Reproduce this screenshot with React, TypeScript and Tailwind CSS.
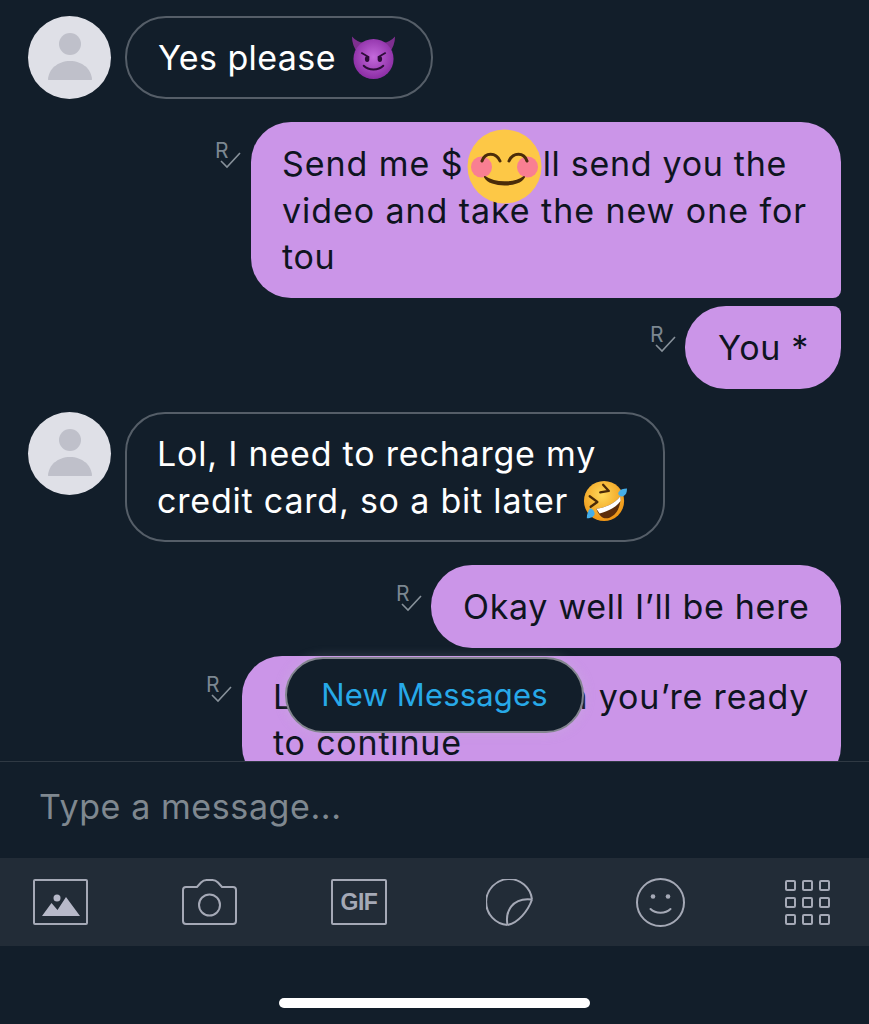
import React from "react";

const font = "font-['Inter','Liberation_Sans',sans-serif]";

function Avatar() {
  return (
    <div className="w-[83px] h-[83px] rounded-full bg-[#dfe0e7] shrink-0 flex items-center justify-center">
      <svg width="83" height="83" viewBox="0 0 83 83">
        <circle cx="42" cy="28" r="11" fill="#bfc0ca" />
        <path d="M20 63.500C20.500 53 30 45 42 45S63.500 53 64 63.500c0 .3-.2.500-.5.500h-43c-.3 0-.5-.2-.5-.5Z" fill="#bfc0ca" />
      </svg>
    </div>
  );
}

function Receipt({ className }: { className: string }) {
  return (
    <div className={`relative w-[26px] h-[30px] shrink-0 mt-[19px] ${className}`}>
      <span className="absolute left-[-1px] top-[-1px] text-[21px] leading-[22px] text-[#7c8791] font-['Inter',sans-serif]">R</span>
      <svg className="absolute left-0 top-0" width="26" height="30" viewBox="0 0 26 30" fill="none">
        <path d="M5 20l6 6 13-14" stroke="#87919a" strokeWidth="1.600" />
      </svg>
    </div>
  );
}

function Devil() {
  return (
    <svg width="45" height="45" viewBox="0 0 46 45" className="shrink-0">
      <defs>
        <radialGradient id="dv" cx="50%" cy="45%" r="60%">
          <stop offset="0%" stopColor="#c469dc" />
          <stop offset="100%" stopColor="#86289f" />
        </radialGradient>
      </defs>
      <path d="M1 1c3 4 8 6 13 7L7 18C3 13 1 7 1 1ZM45 1c-3 4-8 6-13 7l7 10c4-5 6-11 6-17Z" fill="#7e2f8f" />
      <circle cx="23" cy="24" r="20.500" fill="url(#dv)" />
      <path d="M11 18l7 4M35 18l-7 4" stroke="#2c0d38" strokeWidth="1.800" strokeLinecap="round" />
      <ellipse cx="16.500" cy="24" rx="2.300" ry="3" fill="#2c0d38" />
      <ellipse cx="29.500" cy="24" rx="2.300" ry="3" fill="#2c0d38" />
      <path d="M13 31c5 5 15 5 20 0" stroke="#2c0d38" strokeWidth="2" fill="none" strokeLinecap="round" />
    </svg>
  );
}

function Rofl() {
  return (
    <svg width="44" height="44" viewBox="0 0 46 46" className="shrink-0">
      <defs>
        <radialGradient id="rf" cx="45%" cy="35%" r="65%">
          <stop offset="0%" stopColor="#ffd95a" />
          <stop offset="100%" stopColor="#ee9414" />
        </radialGradient>
      </defs>
      <circle cx="22" cy="23" r="21" fill="url(#rf)" />
      <path d="M21 6l6 6.500-9 1.500M7 18l8 6-7 5" stroke="#4a2a08" strokeWidth="2.400" fill="none" strokeLinecap="round" strokeLinejoin="round" />
      <path d="M14 31c9-1 19-5 25-13 1 12-5 21-13 23-6 1-10-4-12-10Z" fill="#5c2d0a" />
      <path d="M14 31c9-1 19-5 25-13l.3 5c-5 7-14 11-22 13Z" fill="#fff" />
      <path d="M37 14c2-3 5-4 9-4 0 4-1 7-4 8-3 1-6-2-5-4ZM7 31c-2 3-3 6-3 10 3 0 7-1 8-4 1-3-3-7-5-6Z" fill="#45aee8" />
    </svg>
  );
}

function Smiling() {
  return (
    <svg width="75" height="75" viewBox="0 0 75 75">
      <circle cx="37.500" cy="37.500" r="37" fill="#fdc846" />
      <circle cx="14.500" cy="38" r="10.500" fill="#f97f92" />
      <circle cx="60.500" cy="38" r="10.500" fill="#f97f92" />
      <path d="M15 32c3-9 14-9 18 0M42 32c4-9 15-9 18 0" stroke="#4a2c0a" strokeWidth="3" fill="none" strokeLinecap="round" />
      <path d="M18 48c10 7 29 7 39 0-5 10-34 10-39 0Z" fill="#4a2c0a" stroke="#4a2c0a" strokeWidth="2" strokeLinejoin="round" />
    </svg>
  );
}

function ToolbarIcons() {
  const c = "#a5a9b6";
  return (
    <div className="h-[88px] bg-[#222c37] flex items-center pl-[33px] shrink-0">
      <svg width="55" height="46" viewBox="0 0 55 46" fill="none">
        <rect x="1" y="1" width="53" height="44" rx="1" stroke={c} strokeWidth="2" />
        <circle cx="24" cy="19" r="3.500" fill="#b7b9c9" />
        <path d="M9 37l9.500-13 6 7L33 18l14 19Z" fill="#b7b9c9" />
      </svg>
      <svg className="ml-[94px]" width="55" height="46" viewBox="0 0 55 46" fill="none">
        <path d="M4 8h11l4-4.500C20.500 2 22.500 1 24.500 1h6c2 0 4 1 5.500 2.500L40 8h11c2 0 3 1 3 3v31c0 2-1 3-3 3H4c-2 0-3-1-3-3V11c0-2 1-3 3-3Z" stroke={c} strokeWidth="2" />
        <circle cx="27.500" cy="26" r="10.500" stroke={c} strokeWidth="2" />
      </svg>
      <div className="ml-[94px] w-[56px] h-[46px] border-2 border-[#a5a9b6] rounded-[2px] flex items-center justify-center text-[#a5a9b6] text-[23px] font-bold font-['Liberation_Sans',sans-serif] tracking-[-0.5px]">
        GIF
      </div>
      <svg className="ml-[99px]" width="47" height="47" viewBox="0 0 47 47" fill="none">
        <path d="M46 20.500A23 23 0 1 0 21.500 46" stroke={c} strokeWidth="2" />
        <path d="M21.500 46C32 44 42 32 46 20.500" stroke={c} strokeWidth="2" />
        <path d="M21.500 46C19 33 26 18 46 20.500" stroke={c} strokeWidth="2" />
      </svg>
      <svg className="ml-[103px]" width="49" height="49" viewBox="0 0 49 49" fill="none">
        <circle cx="24.500" cy="24.500" r="23.500" stroke={c} strokeWidth="2" />
        <circle cx="17" cy="18.500" r="2.300" fill={c} />
        <circle cx="32" cy="18.500" r="2.300" fill={c} />
        <path d="M14.500 31c5 5 15 5 20 0" stroke={c} strokeWidth="2" strokeLinecap="round" />
      </svg>
      <div className="ml-[100px] grid grid-cols-3 gap-[6px]">
        {Array.from({ length: 9 }).map((_, i) => (
          <div key={i} className="w-[11px] h-[11px] border-2 border-[#a5a9b6] rounded-[2px]" />
        ))}
      </div>
    </div>
  );
}

export default function App() {
  const mine = "bg-[#cb95e8] text-[#0e1420] text-[34px] leading-[46.500px]";
  return (
    <div className={`w-[869px] h-[1024px] bg-[#121e2a] flex flex-col overflow-hidden ${font}`}>
      <div className="relative h-[761px] shrink-0 overflow-hidden pt-[16px] flex flex-col">
        <div className="flex pl-[28px] gap-[14px]">
          <Avatar />
          <div className="h-[83px] w-[308px] rounded-[41px] border-2 border-[#555e68] text-white text-[34px] tracking-[0.4px] flex items-center pl-[31px] gap-[15px]">
            <span>Yes please</span>
            <Devil />
          </div>
        </div>

        <div className="flex justify-end pr-[28px] mt-[23px]">
          <Receipt className="mr-[9px]" />
          <div className={`relative w-[590px] h-[176px] rounded-[40px] rounded-br-[8px] pl-[31px] pr-[20px] pt-[19px] ${mine}`}>
            <div className="whitespace-nowrap flex">
              <span className="tracking-[0.95px]">Send me $</span>
              <span className="w-[79px] shrink-0" />
              <span className="tracking-[0.7px]">ll send you the</span>
            </div>
            <div className="whitespace-nowrap tracking-[0.93px]">video and take the new one for</div>
            <div className="tracking-[0.7px]">tou</div>
            <div className="absolute left-[216px] top-[7px]">
              <Smiling />
            </div>
          </div>
        </div>

        <div className="flex justify-end pr-[28px] mt-[8px]">
          <Receipt className="mr-[8px]" />
          <div className={`w-[156px] h-[83px] rounded-[41px] rounded-tr-[8px] flex items-center pl-[33px] pt-[1px] tracking-[0.7px] ${mine}`}>You *</div>
        </div>

        <div className="flex pl-[28px] gap-[14px] mt-[23px]">
          <Avatar />
          <div className="w-[540px] h-[130px] rounded-[40px] border-2 border-[#555e68] text-white text-[34px] leading-[46.500px] tracking-[0.8px] pl-[30px] pt-[17px]">
            <div className="whitespace-nowrap">Lol, I need to recharge my</div>
            <div className="whitespace-nowrap flex items-center gap-[15px]">
              <span>credit card, so a bit later</span>
              <Rofl />
            </div>
          </div>
        </div>

        <div className="flex justify-end pr-[28px] mt-[23px]">
          <Receipt className="mr-[8px]" />
          <div className={`w-[410px] h-[83px] rounded-[41px] rounded-br-[8px] flex items-center pl-[32px] pt-[1px] whitespace-nowrap tracking-[0.7px] ${mine}`}>Okay well I’ll be here</div>
        </div>

        <div className="flex justify-end pr-[28px] mt-[8px]">
          <Receipt className="mr-[9px]" />
          <div className={`w-[599px] h-[130px] rounded-[40px] rounded-tr-[8px] pl-[31px] pt-[18px] shrink-0 tracking-[0.8px] ${mine}`}>
            <div className="whitespace-nowrap">Let me know when you’re ready</div>
            <div className="whitespace-nowrap mt-[-1px]">to continue</div>
          </div>
        </div>

        <div className="absolute left-[285px] top-[657px] w-[299px] h-[76px] rounded-[38px] bg-[#121e2a] border-2 border-[#83858f] shadow-[0_0_12px_rgba(200,200,215,0.25)] flex items-center justify-center text-[#27a9e8] text-[31px] tracking-[0.15px]">
          New Messages
        </div>
      </div>

      <div className="h-[97px] shrink-0 border-t border-[#2f3943] flex items-center pl-[39px] pb-[8px] text-[34px] tracking-[0.6px] text-[#7f8890]">
        Type a message...
      </div>

      <ToolbarIcons />

      <div className="flex-1 flex justify-center pt-[52px]">
        <div className="w-[311px] h-[10px] bg-white rounded-full" />
      </div>
    </div>
  );
}
